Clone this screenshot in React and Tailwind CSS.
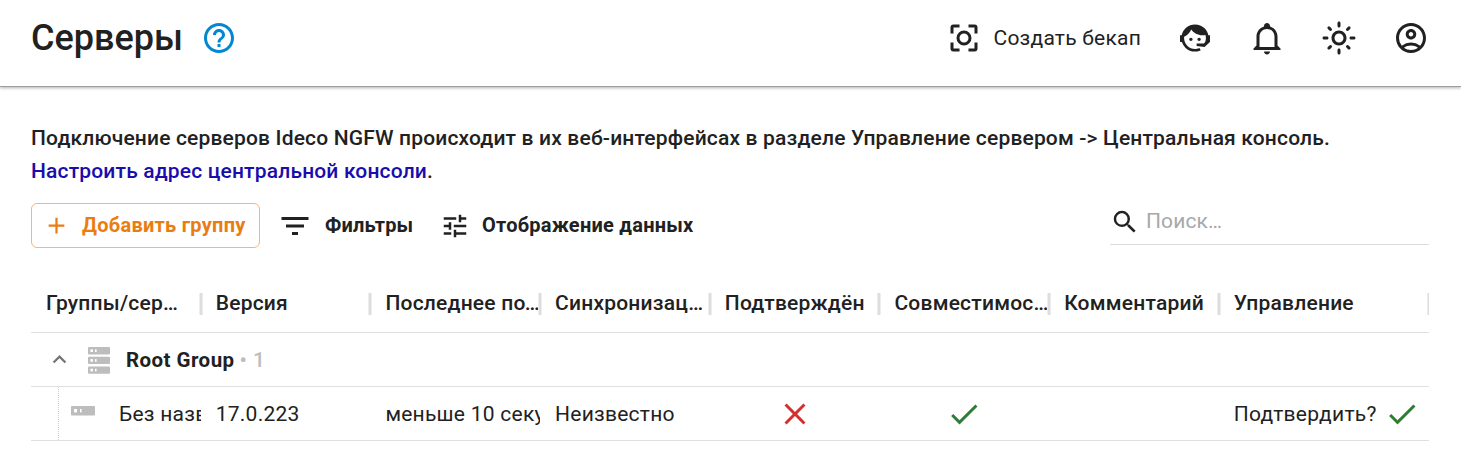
import React from "react";
import {
  MdHelpOutline,
  MdOutlineLightMode,
  MdOutlineAccountCircle,
  MdAdd,
  MdFilterList,
  MdTune,
  MdSearch,
  MdExpandLess,
  MdClose,
  MdCheck,
} from "react-icons/md";

function BackupIcon() {
  return (
    <svg viewBox="0 0 24 24" className="size-9" fill="none" stroke="currentColor" strokeWidth="2">
      <circle cx="12" cy="12" r="4" />
      <path d="M4 9V5a1 1 0 0 1 1-1h4M15 4h4a1 1 0 0 1 1 1v4M20 15v4a1 1 0 0 1-1 1h-4M9 20H5a1 1 0 0 1-1-1v-4" />
    </svg>
  );
}

function AgentIcon() {
  return (
    <svg viewBox="0 0 24 24" className="size-9" fill="currentColor">
      <path d="M18.72,14.76C19.07,13.91 19.26,13 19.26,12C19.26,11.28 19.15,10.59 18.96,9.95C18.31,10.1 17.63,10.18 16.92,10.18C13.86,10.18 11.15,8.67 9.5,6.34C8.61,8.5 6.91,10.26 4.77,11.22C4.73,11.47 4.73,11.74 4.73,12A7.27,7.27 0 0,0 12,19.27C13.05,19.27 14.06,19.04 14.97,18.63C15.54,19.72 15.8,20.26 15.78,20.26C14.14,20.81 12.87,21.08 12,21.08C9.58,21.08 7.27,20.13 5.57,18.42C4.53,17.38 3.76,16.11 3.33,14.73H2V10.18H3.09C3.93,6.04 7.6,2.92 12,2.92C14.4,2.92 16.71,3.87 18.42,5.58C19.69,6.84 20.54,8.45 20.89,10.18H22V14.73H21.94L18.38,18L13.08,17.4V15.73H17.91L18.72,14.76M9.27,11.77C9.57,11.77 9.86,11.89 10.07,12.11C10.28,12.32 10.4,12.61 10.4,12.91C10.4,13.21 10.28,13.5 10.07,13.71C9.86,13.92 9.57,14.04 9.27,14.04C8.64,14.04 8.13,13.54 8.13,12.91C8.13,12.28 8.64,11.77 9.27,11.77M14.72,11.77C15.35,11.77 15.85,12.28 15.85,12.91C15.85,13.54 15.35,14.04 14.72,14.04C14.09,14.04 13.58,13.54 13.58,12.91A1.14,1.14 0 0,1 14.72,11.77Z" />
    </svg>
  );
}

function BellIcon() {
  return (
    <svg viewBox="0 0 24 24" className="size-9" fill="currentColor">
      <path d="M10 21H14C14 22.1 13.1 23 12 23S10 22.1 10 21M21 19V20H3V19L5 17V11C5 7.9 7 5.2 10 4.3V4C10 2.9 10.9 2 12 2S14 2.9 14 4V4.3C17 5.2 19 7.9 19 11V17L21 19M17 11C17 8.2 14.8 6 12 6S7 8.2 7 11V18H17V11Z" />
    </svg>
  );
}

function ServerStackIcon() {
  return (
    <svg viewBox="0 0 22 27" className="h-[27px] w-[22px] shrink-0">
      {[0, 9.7, 19.4].map((y) => (
        <g key={y} transform={`translate(0 ${y})`}>
          <rect width="22" height="7.4" rx="1" fill="#bdbdbd" />
          <rect x="2.4" y="2.4" width="2.6" height="2.6" fill="#fff" />
          <rect x="7" y="2.4" width="1.6" height="2.6" fill="#fff" />
        </g>
      ))}
    </svg>
  );
}

function ServerIcon() {
  return (
    <svg viewBox="0 0 24 10" className="h-2.5 w-6 shrink-0">
      <rect width="24" height="9.6" rx="1" fill="#bdbdbd" />
      <rect x="3" y="3" width="3" height="3.4" fill="#fff" />
      <rect x="9" y="3" width="1.6" height="3.4" fill="#fff" />
    </svg>
  );
}

const COLUMNS = [
  { title: "Группы/серверы", inset: "pr-[18px]" },
  { title: "Версия", inset: "" },
  { title: "Последнее подключение", inset: "" },
  { title: "Синхронизация", inset: "" },
  { title: "Подтверждён", inset: "" },
  { title: "Совместимость", inset: "" },
  { title: "Комментарий", inset: "" },
  { title: "Управление", inset: "" },
];

const GRID = "grid grid-cols-[169.7px_169.7px_169.7px_169.7px_169.7px_169.7px_169.7px_210px]";

export default function App() {
  return (
    <div className="h-[461px] w-[1461px] overflow-hidden bg-white font-['Roboto',sans-serif] text-[21px] text-[#212121]">
      <header className="flex h-[87px] items-start border-b border-[#9e9e9e] pl-[31px] pr-8 pt-5 shadow-[0_1px_3px_rgba(0,0,0,0.3)]">
        <h1 className="text-[36px] font-medium leading-9">Серверы</h1>
        <MdHelpOutline className="ml-[18px] size-9 text-[#0288d1]" />
        <div className="ml-auto flex items-center">
          <BackupIcon />
          <span className="ml-3 text-[21px] leading-9 tracking-[0.22px]">Создать бекап</span>
          <div className="ml-9 flex gap-9">
            <AgentIcon />
            <BellIcon />
            <MdOutlineLightMode className="size-9" />
            <MdOutlineAccountCircle className="size-9" />
          </div>
        </div>
      </header>

      <main className="pl-[31px] pr-8 pt-[35px]">
        <p className="whitespace-nowrap font-medium leading-[33px] tracking-[0.17px]">
          Подключение серверов Ideco NGFW происходит в их веб-интерфейсах в разделе Управление сервером -&gt; Центральная консоль.
          <br />
          <a className="text-[#1a0dab]">Настроить адрес центральной консоли</a>.
        </p>

        <div className="mt-[15px] flex h-[45px] items-center font-bold">
          <button className="flex h-[45px] w-[229px] items-center rounded-md border border-[#f5b777] pl-[11px] text-[20px] tracking-[0.27px] text-[#e97d12]">
            <MdAdd className="size-[27px] shrink-0" />
            <span className="ml-3 whitespace-nowrap pb-0.5">Добавить группу</span>
          </button>
          <button className="ml-[17px] flex items-center text-[20px] tracking-[0.2px]">
            <MdFilterList className="size-9" />
            <span className="ml-3 w-[87px] pb-0.5 text-left">Фильтры</span>
          </button>
          <button className="ml-7 flex items-center text-[20px] tracking-[0.25px]">
            <MdTune className="size-[30px]" />
            <span className="ml-3 pb-0.5">Отображение данных</span>
          </button>
          <label className="mb-1.5 ml-auto flex h-[45px] w-[319px] items-center border-b border-[#dcdcdc] font-normal tracking-[0.1px] text-[#a8a8a8]">
            <MdSearch className="size-[30px] text-[#212121]" />
            <span className="ml-1.5">Поиск…</span>
          </label>
        </div>

        <section className="mt-[26px] w-[1398px] overflow-hidden">
          <div className={`${GRID} h-[59px] border-b border-[#e0e0e0] font-medium tracking-[0.22px]`}>
            {COLUMNS.map(({ title, inset }) => (
              <div key={title} className="flex items-center pl-[15px]">
                <span className={`min-w-0 flex-1 truncate pt-0.5 ${inset}`}>{title}</span>
                <span className="-mx-0.5 mt-0.5 h-[22px] w-1 shrink-0 border-x border-[#eeeeee] bg-[#dddddd]" />
              </div>
            ))}
          </div>

          <div className="flex h-[54px] items-center border-b border-[#e0e0e0] pl-[15px]">
            <MdExpandLess className="size-[27px] text-[#757575]" />
            <span className="ml-[15.4px] mt-0.5 flex">
              <ServerStackIcon />
            </span>
            <span className="ml-[15.6px] pt-0.5 text-[20.5px] font-bold tracking-[0.45px]">Root Group</span>
            <span className="ml-[5px] pt-0.5 font-medium tracking-[0.4px] text-[#bdbdbd]">• 1</span>
          </div>

          <div className={`${GRID} h-[54px] whitespace-nowrap border-b border-[#e0e0e0] leading-[55px] tracking-[0.25px]`}>
            <div className="ml-[27px] flex h-[53px] items-center overflow-hidden border-l border-dotted border-[#d0d0d0] pl-3">
              <span className="mb-1.5 flex">
                <ServerIcon />
              </span>
              <span className="ml-6 pt-0.5">Без названия</span>
            </div>
            <div className="overflow-hidden pl-[15px]">17.0.223</div>
            <div className="overflow-hidden pl-[15px]">меньше 10 секунд назад</div>
            <div className="overflow-hidden pl-[15px]">Неизвестно</div>
            <div className="flex h-[53px] items-center justify-center">
              <MdClose className="size-9 text-[#d32f2f]" />
            </div>
            <div className="flex h-[53px] items-center justify-center">
              <MdCheck className="size-9 text-[#2e7d32]" />
            </div>
            <div />
            <div className="flex h-[53px] items-center pl-[15px]">
              <span className="pt-px">Подтвердить?</span>
              <MdCheck className="ml-[7px] size-9 text-[#2e7d32]" />
            </div>
          </div>
        </section>
      </main>
    </div>
  );
}
